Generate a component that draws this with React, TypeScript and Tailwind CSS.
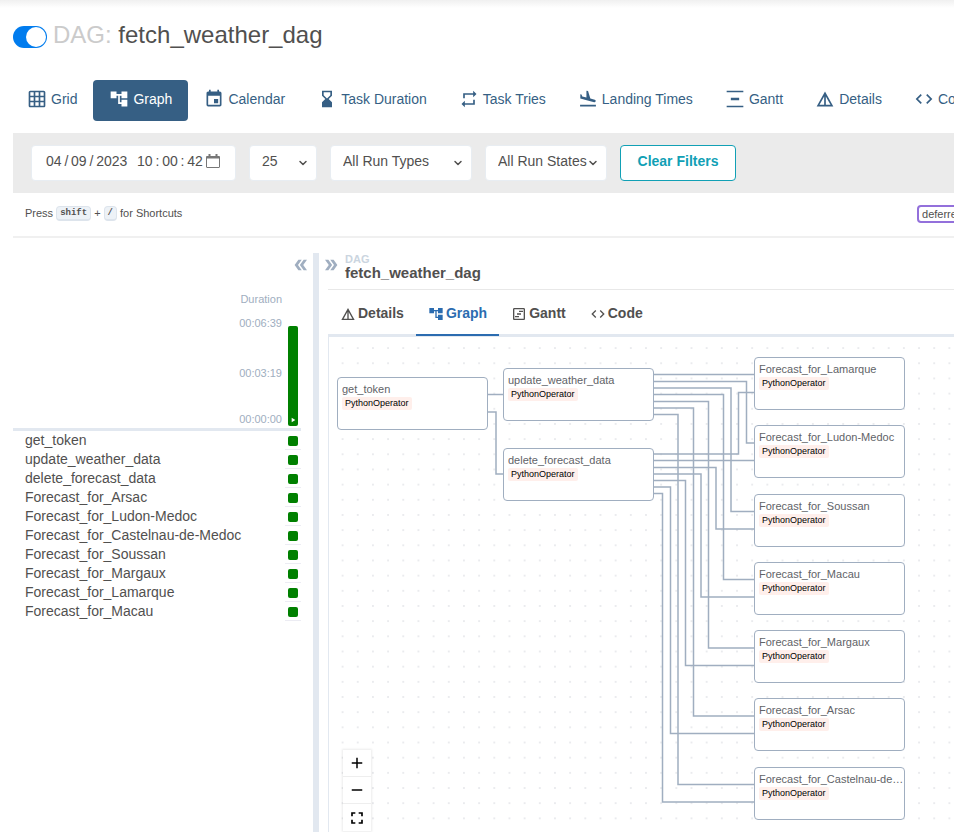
import type { ReactNode } from "react";
import type { IconType } from "react-icons";
import {
  MdAccountTree,
  MdAdd,
  MdCode,
  MdDetails,
  MdDoubleArrow,
  MdEvent,
  MdFlightLand,
  MdFullscreen,
  MdGridOn,
  MdHourglassBottom,
  MdOutlineViewTimeline,
  MdPlayArrow,
  MdRemove,
  MdRepeat,
  MdVerticalDistribute,
} from "react-icons/md";
import { ChevronDown } from "lucide-react";

const navItems: { label: string; icon: IconType; active?: boolean }[] = [
  { label: "Grid", icon: MdGridOn },
  { label: "Graph", icon: MdAccountTree, active: true },
  { label: "Calendar", icon: MdEvent },
  { label: "Task Duration", icon: MdHourglassBottom },
  { label: "Task Tries", icon: MdRepeat },
  { label: "Landing Times", icon: MdFlightLand },
  { label: "Gantt", icon: MdVerticalDistribute },
  { label: "Details", icon: MdDetails },
  { label: "Code", icon: MdCode },
];

const tabs: { label: string; icon: IconType; active?: boolean }[] = [
  { label: "Details", icon: MdDetails },
  { label: "Graph", icon: MdAccountTree, active: true },
  { label: "Gantt", icon: MdOutlineViewTimeline },
  { label: "Code", icon: MdCode },
];

const tasks = [
  "get_token",
  "update_weather_data",
  "delete_forecast_data",
  "Forecast_for_Arsac",
  "Forecast_for_Ludon-Medoc",
  "Forecast_for_Castelnau-de-Medoc",
  "Forecast_for_Soussan",
  "Forecast_for_Margaux",
  "Forecast_for_Lamarque",
  "Forecast_for_Macau",
];

const nodes = [
  { name: "get_token", x: 8, y: 40 },
  { name: "update_weather_data", x: 174, y: 31 },
  { name: "delete_forecast_data", x: 174, y: 111 },
  { name: "Forecast_for_Lamarque", x: 425, y: 20 },
  { name: "Forecast_for_Ludon-Medoc", x: 425, y: 88 },
  { name: "Forecast_for_Soussan", x: 425, y: 157 },
  { name: "Forecast_for_Macau", x: 425, y: 225 },
  { name: "Forecast_for_Margaux", x: 425, y: 293 },
  { name: "Forecast_for_Arsac", x: 425, y: 361 },
  { name: "Forecast_for_Castelnau-de-Medoc", x: 425, y: 430 },
];

const edges = [
  "M158 57.5H174",
  "M158 75H167V137H174",
  "M324 37.5H425",
  "M324 44.5H417.5V106H425",
  "M324 51H402V174.5H425",
  "M324 57.5H394.5V242.5H425",
  "M324 64.5H379.5V311H425",
  "M324 71H364.5V379H425",
  "M324 77.5H349V447.5H425",
  "M324 117H409.5V55.5H425",
  "M324 123.5H425",
  "M324 130.5H387V192H425",
  "M324 137H372V260H425",
  "M324 143.5H356.5V328.5H425",
  "M324 150H341.5V396.5H425",
  "M324 156.5H333.5V465H425",
];

function FilterSelect({ label, value, className }: { label: string; value: string; className: string }) {
  return (
    <div className={`relative shrink-0 ${className}`}>
      <select
        aria-label={label}
        className="h-9 w-full appearance-none rounded border border-[#e8edf2] bg-white pb-1 pl-3 text-sm text-[#51504f]"
      >
        <option>{value}</option>
      </select>
      <ChevronDown className="pointer-events-none absolute top-3 right-2 size-3" strokeWidth={3} />
    </div>
  );
}

function Kbd({ children }: { children: ReactNode }) {
  return (
    <kbd className="rounded border border-b-2 border-[#dde4ec] bg-[#edf2f7] px-[3px] font-['Liberation_Mono',monospace] text-[9px] leading-3 font-bold">
      {children}
    </kbd>
  );
}

function RunGrid() {
  return (
    <section className="w-[300px] shrink-0" aria-label="Runs">
      <div className="relative mr-3 h-[178px] border-b-[3px] border-[#e2e8f0] text-[11px] leading-3 text-[#a0aec0]">
        <button aria-label="Hide runs" className="absolute top-[3px] right-[-9px]">
          <MdDoubleArrow className="size-[18px] rotate-180" />
        </button>
        <div className="flex h-full justify-end gap-[6px] pr-[3px]">
          <div className="flex flex-col text-right">
            <span className="pt-10">Duration</span>
            <span className="pt-3">00:06:39</span>
            <span className="pt-[38px]">00:03:19</span>
            <span className="pt-[34px]">00:00:00</span>
          </div>
          <div className="flex items-end pb-[2px]">
            <button
              aria-label="Run, 00:06:39"
              className="flex h-[100px] w-[10px] items-end justify-center rounded-[2px] bg-[#008000] pb-[2px] text-white"
            >
              <MdPlayArrow className="size-2" />
            </button>
          </div>
        </div>
      </div>
      <ul className="mr-3">
        {tasks.map((task) => (
          <li key={task} className="flex h-[19px] items-stretch justify-between pl-3 text-sm leading-[19px]">
            <span>{task}</span>
            <span className="flex w-4 items-end border-b border-[#ececf3] pb-[3px] pl-[3px]">
              <span className="size-[10px] rounded-[2px] bg-[#008000]" />
            </span>
          </li>
        ))}
      </ul>
    </section>
  );
}

function GraphCanvas() {
  return (
    <div className="relative min-h-0 flex-1 overflow-hidden border-l border-[#e2e8f0]">
      <svg className="absolute inset-0 size-full" aria-hidden="true">
        <defs>
          <pattern id="dots" x="6" y="3.5" width="15.17" height="15.17" patternUnits="userSpaceOnUse">
            <circle cx="7.6" cy="7.6" r="0.7" fill="#c9cdd3" />
          </pattern>
        </defs>
        <rect width="100%" height="100%" fill="url(#dots)" />
        <g fill="none" stroke="#a0aec0" strokeWidth="1.5">
          {edges.map((d) => (
            <path key={d} d={d} />
          ))}
        </g>
      </svg>
      {nodes.map((node) => (
        <div
          key={node.name}
          className="absolute h-[53px] w-[151px] rounded border border-[#a0aec0] bg-white pt-1 pl-1"
          style={{ left: node.x, top: node.y }}
        >
          <div className="truncate text-[11px] leading-[14px] text-[#5f6368]">{node.name}</div>
          <span className="mt-px block w-fit rounded-[2px] bg-[#ffefeb] px-[3px] text-[9px] leading-[13px] text-black">
            PythonOperator
          </span>
        </div>
      ))}
      <div className="absolute bottom-px left-[14px] flex w-7 flex-col divide-y divide-[#eee] bg-white text-black shadow-[0_0_2px_1px_rgba(0,0,0,0.08)]">
        <button aria-label="Zoom in" className="flex h-[27px] items-center justify-center">
          <MdAdd className="size-[18px]" />
        </button>
        <button aria-label="Zoom out" className="flex h-[27px] items-center justify-center">
          <MdRemove className="size-[18px]" />
        </button>
        <button aria-label="Fit view" className="flex h-[27px] items-center justify-center">
          <MdFullscreen className="size-5" />
        </button>
      </div>
    </div>
  );
}

export default function App() {
  return (
    <div className="flex h-screen flex-col overflow-hidden bg-white pl-[13px] font-['Liberation_Sans',Arial,sans-serif] text-sm text-[#51504f]">
      <div className="-ml-[13px] h-2 shrink-0 bg-linear-to-b from-[#f0f0f0] to-white" />
      <header className="flex h-[72px] shrink-0 items-start gap-[6px] pt-[11px]">
        <label className="mt-[7px] flex cursor-pointer">
          <input type="checkbox" defaultChecked aria-label="Pause or unpause DAG" className="peer sr-only" />
          <span className="flex h-[22px] w-[34px] justify-end rounded-full bg-[#c4c4c4] p-px peer-checked:bg-[#017cee]">
            <span className="size-5 rounded-full bg-white" />
          </span>
        </label>
        <h1 className="text-2xl leading-8">
          <span className="text-[#cbcbcb]">DAG:</span> fetch_weather_dag
        </h1>
      </header>

      <nav className="-ml-[2px] flex h-[53px] shrink-0 items-start">
        {navItems.map(({ label, icon: Icon, active }) => (
          <a
            key={label}
            href="#"
            className={`flex h-[41px] shrink-0 items-center gap-1 rounded px-4 pb-[3px] ${
              active ? "bg-[#365f84] text-white" : "text-[#365f84]"
            }`}
          >
            <Icon className="size-5" />
            {label}
          </a>
        ))}
      </nav>

      <div className="flex h-[60px] shrink-0 items-center gap-[13px] bg-[#ebebeb] px-[18px]">
        <div className="relative w-[205px] shrink-0">
          <input
            type="text"
            aria-label="Base date"
            defaultValue={"04\u2009/\u200909\u2009/\u20092023\u2002\u200910\u2009:\u200900\u2009:\u200942"}
            className="h-9 w-full rounded border border-[#e8edf2] bg-white pb-1 pl-[14px] text-sm text-[#51504f]"
          />
          <svg
            className="pointer-events-none absolute top-[9px] right-4 h-[14px] w-[14px]"
            viewBox="0 0 14 14"
            fill="none"
            stroke="#777"
            aria-hidden="true"
          >
            <rect x="0.5" y="2.5" width="13" height="11" rx="0.5" />
            <path d="M0 3.5h14M3.5 0v3M10.5 0v3" strokeWidth="2" />
          </svg>
        </div>
        <FilterSelect label="Number of runs" value="25" className="w-[68px]" />
        <FilterSelect label="Run types" value="All Run Types" className="w-[142px]" />
        <FilterSelect label="Run states" value="All Run States" className="w-[122px]" />
        <button className="h-9 w-[116px] shrink-0 rounded border border-[#11a0b5] bg-white pb-1 font-bold text-[#11a0b5]">
          Clear Filters
        </button>
      </div>

      <div className="flex h-[45px] shrink-0 items-center justify-between border-b-2 border-[#f0f0f0] pb-[2px] pl-3 text-[11px]">
        <p className="flex items-center gap-[3px]">
          Press <Kbd>shift</Kbd> + <Kbd>/</Kbd> for Shortcuts
        </p>
        <span className="-mr-[14px] rounded border-2 border-[#9370db] px-[3px] leading-[14px]">deferred</span>
      </div>

      <div className="flex min-h-0 flex-1 pt-[15px]">
        <RunGrid />
        <div className="w-[6px] shrink-0 bg-[#e2e8f0]" />
        <main className="ml-[9px] flex min-w-0 flex-1 flex-col">
          <div className="relative flex h-[37px] shrink-0 items-start border-b border-[#e8e8e8] pl-[17px]">
            <button aria-label="Hide details" className="absolute top-[3px] left-[-6px] text-[#a0aec0]">
              <MdDoubleArrow className="size-[18px]" />
            </button>
            <div className="font-bold">
              <div className="text-[11px] leading-3 text-[#cbd5e0]">DAG</div>
              <div className="text-[15px] leading-4">fetch_weather_dag</div>
            </div>
          </div>
          <div role="tablist" className="flex h-[47px] shrink-0 border-b-[3px] border-[#e2e8f0]">
            {tabs.map(({ label, icon: Icon, active }) => (
              <button
                key={label}
                role="tab"
                aria-selected={!!active}
                className={`-mb-[2px] flex items-center gap-[2px] border-b-2 px-3 pt-[2px] font-bold ${
                  active ? "border-[#2b6cb0] text-[#2b6cb0]" : "border-transparent"
                }`}
              >
                <Icon className="mt-[2px] size-4" />
                {label}
              </button>
            ))}
          </div>
          <GraphCanvas />
        </main>
      </div>
    </div>
  );
}
